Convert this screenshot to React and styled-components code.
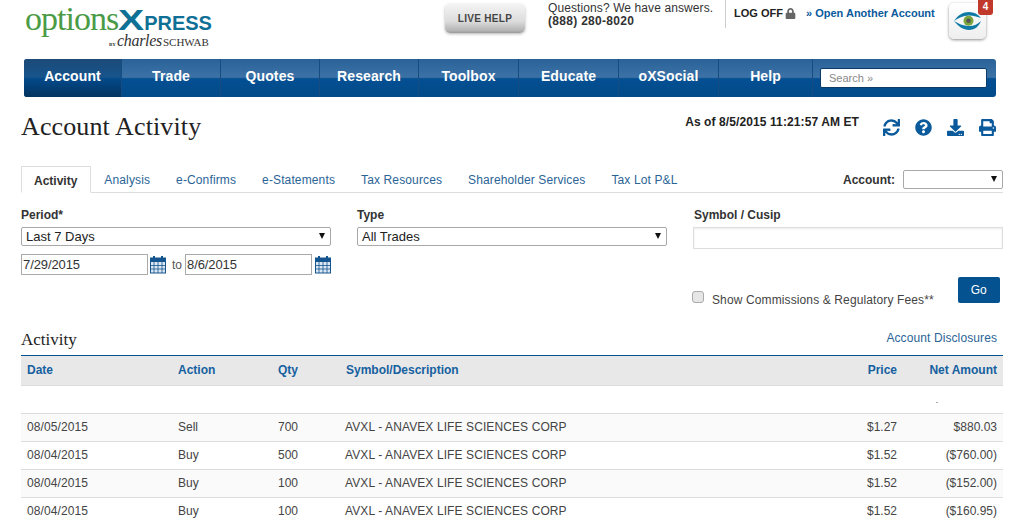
import React from 'react'
import styled, { createGlobalStyle } from 'styled-components'
import { FaSync, FaQuestionCircle, FaDownload, FaPrint, FaLock } from 'react-icons/fa'

const Global = createGlobalStyle`
  html, body { margin: 0; padding: 0; background: #fff; overflow: hidden; }
  body { font-family: "Liberation Sans", Arial, sans-serif; font-size: 12px; color: #333; }
  * { box-sizing: border-box; }
`

const Page = styled.div`
  width: 1028px;
  height: 525px;
  overflow: hidden;
`

const Header = styled.header`
  display: flex;
  height: 59px;
`

const Logo = styled.div`
  width: 420px;
  margin-left: 25px;
  padding-top: 4px;
`

const LogoTop = styled.div`
  display: flex;
  align-items: baseline;
  height: 30px;
  line-height: 30px;
`

const LogoOptions = styled.span`
  font-family: "Liberation Serif", serif;
  font-size: 34px;
  letter-spacing: -1px;
  color: #4b9b46;
`

const LogoX = styled.span`
  width: 26px;
  font-weight: bold;
  font-size: 29px;
  transform: scaleX(1.35);
  transform-origin: left;
  color: #0f7096;
`

const LogoPress = styled.span`
  font-weight: bold;
  font-size: 20px;
  color: #0f7096;
`

const LogoBy = styled.div`
  display: flex;
  align-items: baseline;
  padding-left: 84px;
  font-family: "Liberation Serif", serif;
  color: #333;
  line-height: 14px;
`

const BySmall = styled.span`
  font-size: 5px;
  font-weight: bold;
  margin-right: 1px;
`

const Charles = styled.span`
  font-style: italic;
  font-size: 16px;
  letter-spacing: -0.3px;
`

const Schwab = styled.span`
  font-size: 11px;
  margin-left: 1px;
`

const LiveHelp = styled.div`
  width: 80px;
  height: 29px;
  margin-top: 4px;
  border-radius: 5px;
  background: linear-gradient(#f4f4f4, #dcdcdc 60%, #b4b4b4 92%, #999);
  box-shadow: 0 1px 3px rgba(0, 0, 0, 0.3);
  display: flex;
  align-items: center;
  justify-content: center;
  font-size: 10px;
  font-weight: bold;
  letter-spacing: 0.3px;
  color: #444;
`

const Questions = styled.div`
  width: 177px;
  margin-left: 23px;
  padding-top: 2px;
  font-size: 12px;
  line-height: 13px;
  letter-spacing: 0.1px;
  color: #333;
`

const Phone = styled.div`
  font-weight: bold;
  font-size: 12px;
  letter-spacing: 0.3px;
  color: #333;
`

const LogOff = styled.div`
  height: 28px;
  width: 81px;
  padding: 7px 0 0 8px;
  border-left: 1px solid #ccc;
  font-size: 11px;
  font-weight: bold;
  color: #222;
  display: flex;
  gap: 2px;
  align-items: flex-start;
  svg { color: #666; width: 11px; height: 11px; margin-top: 1px; }
`

const OpenLink = styled.a`
  width: 143px;
  padding-top: 7px;
  font-size: 11px;
  font-weight: bold;
  color: #0a5a9c;
`

const EyeButton = styled.div`
  position: relative;
  width: 37px;
  height: 36px;
  margin-top: 3px;
  border-radius: 5px;
  background: linear-gradient(#fff, #eee);
  box-shadow: 0 1px 3px rgba(0, 0, 0, 0.45);
  display: flex;
  align-items: center;
  justify-content: center;
`

const Badge = styled.span`
  position: absolute;
  top: -3px;
  right: -7px;
  width: 15px;
  height: 15px;
  padding-top: 1px;
  border-radius: 0 0 3px 3px;
  background: #c0392b;
  color: #fff;
  font-size: 10px;
  font-weight: bold;
  text-align: center;
`

const Nav = styled.nav`
  display: flex;
  height: 38px;
  margin: 0 32px 0 24px;
  border-radius: 3px;
  overflow: hidden;
  background: linear-gradient(#2a6298, #3c72a6 48%, #034f92 52%, #034b8a);
`

const NavItem = styled.a`
  flex: 0 0 ${p => p.$w}px;
  display: flex;
  align-items: center;
  justify-content: center;
  padding-bottom: 4px;
  border-right: 1px solid #164c80;
  font-size: 14px;
  font-weight: bold;
  letter-spacing: 0.1px;
  color: #fff;
  background: ${p => p.$active ? 'linear-gradient(#1c4a78, #17548c 48%, #03498a 52%, #03345f)' : 'none'};
`

const SearchWrap = styled.div`
  flex: 1;
  display: flex;
  align-items: center;
  padding: 0 9px 0 7px;
`

const SearchBox = styled.div`
  width: 167px;
  height: 20px;
  padding: 3px 8px;
  background: #fff;
  border: 1px solid #0b3a66;
  border-radius: 2px;
  font-size: 11px;
  color: #888;
`

const TitleRow = styled.div`
  display: flex;
  height: 69px;
  padding: 15px 32px 0 21px;
`

const Title = styled.h1`
  flex: 1;
  margin: 0;
  font-family: "Liberation Serif", serif;
  font-size: 26px;
  font-weight: normal;
  line-height: 30px;
  letter-spacing: 0.12px;
  color: #222;
`

const AsOf = styled.div`
  margin-right: 24px;
  padding-top: 3px;
  font-size: 12px;
  font-weight: bold;
  letter-spacing: 0.1px;
  color: #222;
`

const IconRow = styled.div`
  display: flex;
  gap: 15px;
  padding-top: 7px;
  height: 26px;
  svg { width: 17px; height: 17px; color: #0a5a9c; }
`

const TabBar = styled.div`
  display: flex;
  align-items: flex-end;
  height: 27px;
  margin: 0 25px 0 21px;
  border-bottom: 1px solid #ddd;
`

const Tab = styled.a`
  height: 26px;
  padding: 7px 13px 0;
  font-size: 12px;
  letter-spacing: 0.13px;
  color: #2a6496;
`

const ActiveTab = styled(Tab)`
  height: 27px;
  margin-bottom: -1px;
  padding: 7px 13px 0 12px;
  letter-spacing: 0;
  font-weight: bold;
  color: #333;
  background: #fff;
  border: 1px solid #ddd;
  border-bottom-color: #fff;
`

const AccountPick = styled.div`
  margin-left: auto;
  display: flex;
  align-items: center;
  gap: 8px;
  height: 26px;
  padding-top: 1px;
  font-size: 12px;
  font-weight: bold;
  color: #333;
`

const Select = styled.div`
  position: relative;
  width: ${p => p.$w}px;
  height: 19px;
  padding: 1px 4px;
  background: #fff;
  border: 1px solid #a9a9a9;
  border-radius: 2px;
  font-size: 13px;
  font-weight: normal;
  line-height: 16px;
  color: #222;
  &::after {
    content: "";
    position: absolute;
    right: 5px;
    top: 5px;
    border-left: 3.5px solid transparent;
    border-right: 3.5px solid transparent;
    border-top: 6px solid #111;
  }
`

const FormGrid = styled.div`
  display: grid;
  grid-template-columns: 336px 337px 310px;
  margin: 15px 0 0 21px;
  height: 126px;
`

const Label = styled.div`
  height: 19px;
  font-size: 12px;
  font-weight: bold;
  line-height: 14px;
  color: #333;
`

const DateRow = styled.div`
  display: flex;
  align-items: center;
  margin-top: 8px;
  color: #555;
`

const DateInput = styled.div`
  width: 127px;
  height: 21px;
  padding: 2px 1px;
  border: 1px solid #aaa;
  font-size: 13px;
  letter-spacing: -0.1px;
  color: #333;
`

const To = styled.span`
  margin: 0 3px 0 6px;
  font-size: 12px;
`

const CalIcon = styled.svg`
  width: 16px;
  height: 19px;
  margin-left: ${p => p.$ml}px;
`

const SymbolInput = styled.div`
  width: 310px;
  height: 22px;
  margin-left: -1px;
  background: #fff;
  border: 1px solid #ddd;
  box-shadow: inset 0 1px 2px rgba(0, 0, 0, 0.08);
`

const FeeRow = styled.div`
  display: flex;
  align-items: flex-end;
  margin-top: 28px;
  height: 26px;
`

const Check = styled.span`
  width: 12px;
  height: 12px;
  margin: 0 8px 0 -2px;
  background: #e6e6e6;
  border: 1px solid #aaa;
  border-radius: 3px;
`

const FeeText = styled.span`
  margin-bottom: -4px;
  font-size: 12px;
  letter-spacing: 0.12px;
  color: #444;
`

const GoButton = styled.button`
  width: 42px;
  height: 26px;
  margin-left: 24px;
  border: 0;
  border-radius: 2px;
  background: #04528f;
  color: #fff;
  font-family: inherit;
  font-size: 12px;
`

const SectionHead = styled.div`
  display: flex;
  justify-content: space-between;
  align-items: flex-end;
  height: 21px;
  margin: 0 25px 0 21px;
  padding: 0 6px 5px 0;
`

const SectionTitle = styled.h2`
  margin: 0;
  font-family: "Liberation Serif", serif;
  font-size: 17px;
  font-weight: normal;
  color: #222;
`

const Disclosure = styled.a`
  font-size: 12px;
  letter-spacing: 0.1px;
  color: #2a6496;
  padding-bottom: 5px;
`

const Table = styled.div`
  margin: 0 25px 0 21px;
`

const Row = styled.div`
  display: grid;
  grid-template-columns: 151px 100px 68px 1fr 70px 100px;
  align-items: center;
  height: 28px;
  padding: 0 6px 2px;
  font-size: 12px;
  color: #444;
  background: ${p => p.$odd ? '#fafafa' : '#fff'};
  border-bottom: 1px solid #ddd;
`

const HeadRow = styled(Row)`
  height: 31px;
  padding-bottom: 2px;
  background: #e8e8e8;
  border-top: 1px solid #04528f;
  border-bottom: 1px solid #ddd;
  font-weight: bold;
  color: #15609f;
`

const BlankRow = styled(Row)`
  display: block;
  position: relative;
`

const Dot = styled.span`
  position: absolute;
  right: 65px;
  top: 16px;
  width: 2px;
  height: 1px;
  background: #aaa;
`

const DateCell = styled.span`
  letter-spacing: 0.1px;
`

const Num = styled.span`
  text-align: right;
`

const Desc = styled.span`
  margin-left: -1px;
  letter-spacing: 0.1px;
`

const Calendar = ({ ml }) => (
  <CalIcon $ml={ml} viewBox="0 0 16 19">
    <rect x="0.5" y="3" width="15" height="15" fill="#dbe8f3" stroke="#14558f" />
    <rect x="0.5" y="3" width="15" height="4" fill="#14558f" />
    <rect x="3" y="1" width="2" height="4" fill="#14558f" />
    <rect x="11" y="1" width="2" height="4" fill="#14558f" />
    <path d="M4 7v11M8 7v11M12 7v11M1 10.5h14M1 14h14" stroke="#14558f" strokeWidth="0.8" />
  </CalIcon>
)

const Eye = () => (
  <svg width="29" height="20" viewBox="0 0 29 20">
    <path d="M1 10C5 4 10 1 16 1c5 0 9 2 12 6-3-1-7-2.500-12-2.500C10 4.500 5 7 1 10z" fill="#0f7aa6" />
    <path d="M1 10c4 2.500 9 5 15 5 5 0 9-2 12-5-2 5-6 9-12 9-6 0-11-4-15-9z" fill="#0f7aa6" />
    <circle cx="15.500" cy="9.800" r="5" fill="#7aa63c" />
    <circle cx="15.500" cy="9.800" r="2.300" fill="#555" />
  </svg>
)

const navItems = [
  ['Account', 98], ['Trade', 99], ['Quotes', 99], ['Research', 99],
  ['Toolbox', 100], ['Educate', 100], ['oXSocial', 100], ['Help', 94],
]

const tabs = ['Analysis', 'e-Confirms', 'e-Statements', 'Tax Resources', 'Shareholder Services', 'Tax Lot P&L']

const trades = [
  ['08/05/2015', 'Sell', '700', '$1.27', '$880.03'],
  ['08/04/2015', 'Buy', '500', '$1.52', '($760.00)'],
  ['08/04/2015', 'Buy', '100', '$1.52', '($152.00)'],
  ['08/04/2015', 'Buy', '100', '$1.52', '($160.95)'],
]

export default function App() {
  return (
    <Page>
      <Global />
      <Header>
        <Logo>
          <LogoTop>
            <LogoOptions>options</LogoOptions>
            <LogoX>X</LogoX>
            <LogoPress>PRESS</LogoPress>
          </LogoTop>
          <LogoBy>
            <BySmall>BY</BySmall>
            <Charles>charles</Charles>
            <Schwab>SCHWAB</Schwab>
          </LogoBy>
        </Logo>
        <LiveHelp>LIVE HELP</LiveHelp>
        <Questions>
          Questions? We have answers.
          <Phone>(888) 280-8020</Phone>
        </Questions>
        <LogOff>LOG OFF <FaLock /></LogOff>
        <OpenLink>» Open Another Account</OpenLink>
        <EyeButton>
          <Eye />
          <Badge>4</Badge>
        </EyeButton>
      </Header>

      <Nav>
        {navItems.map(([label, w], i) => (
          <NavItem key={label} $w={w} $active={i === 0}>{label}</NavItem>
        ))}
        <SearchWrap>
          <SearchBox>Search »</SearchBox>
        </SearchWrap>
      </Nav>

      <TitleRow>
        <Title>Account Activity</Title>
        <AsOf>As of 8/5/2015 11:21:57 AM ET</AsOf>
        <IconRow>
          <FaSync />
          <FaQuestionCircle />
          <FaDownload />
          <FaPrint />
        </IconRow>
      </TitleRow>

      <TabBar>
        <ActiveTab>Activity</ActiveTab>
        {tabs.map(t => (
          <Tab key={t}>{t}</Tab>
        ))}
        <AccountPick>
          Account:
          <Select $w={100} />
        </AccountPick>
      </TabBar>

      <FormGrid>
        <div>
          <Label>Period*</Label>
          <Select $w={310}>Last 7 Days</Select>
          <DateRow>
            <DateInput>7/29/2015</DateInput>
            <Calendar ml={2} />
            <To>to</To>
            <DateInput>8/6/2015</DateInput>
            <Calendar ml={3} />
          </DateRow>
        </div>
        <div>
          <Label>Type</Label>
          <Select $w={310}>All Trades</Select>
        </div>
        <div>
          <Label>Symbol / Cusip</Label>
          <SymbolInput />
          <FeeRow>
            <Check />
            <FeeText>Show Commissions &amp; Regulatory Fees**</FeeText>
            <GoButton>Go</GoButton>
          </FeeRow>
        </div>
      </FormGrid>

      <SectionHead>
        <SectionTitle>Activity</SectionTitle>
        <Disclosure>Account Disclosures</Disclosure>
      </SectionHead>

      <Table>
        <HeadRow>
          <span>Date</span>
          <span>Action</span>
          <span>Qty</span>
          <span>Symbol/Description</span>
          <Num>Price</Num>
          <Num>Net Amount</Num>
        </HeadRow>
        <BlankRow><Dot /></BlankRow>
        {trades.map((t, i) => (
          <Row key={i} $odd={i % 2 === 0}>
            <DateCell>{t[0]}</DateCell>
            <span>{t[1]}</span>
            <span>{t[2]}</span>
            <Desc>AVXL - ANAVEX LIFE SCIENCES CORP</Desc>
            <Num>{t[3]}</Num>
            <Num>{t[4]}</Num>
          </Row>
        ))}
      </Table>
    </Page>
  )
}
